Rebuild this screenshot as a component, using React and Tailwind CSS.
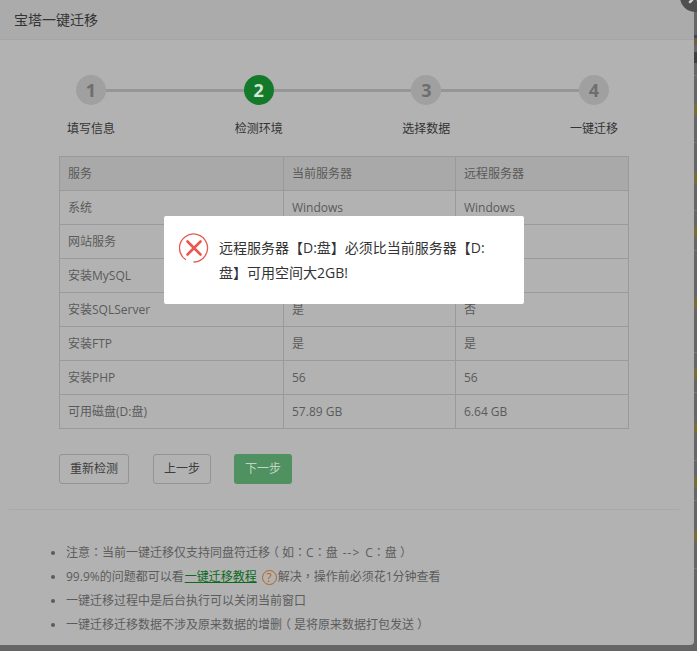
import { X } from "lucide-react";

const font = "font-['Open_Sans','Noto_Sans_CJK_SC',sans-serif]";

const steps = [
  { n: 1, label: "填写信息" },
  { n: 2, label: "检测环境", active: true },
  { n: 3, label: "选择数据" },
  { n: 4, label: "一键迁移" },
];

const rows = [
  ["系统", "Windows", "Windows"],
  ["网站服务", "", ""],
  ["安装MySQL", "", ""],
  ["安装SQLServer", "是", "否"],
  ["安装FTP", "是", "是"],
  ["安装PHP", "56", "56"],
  ["可用磁盘(D:盘)", "57.89 GB", "6.64 GB"],
];

// full width punctuation sits in the middle of its box in the reference
function Punct({ children }) {
  return <span className="font-['Noto_Sans_CJK_TC',sans-serif] leading-none">{children}</span>;
}

function OpenParen() {
  return <span className="inline-block leading-none -translate-x-[3px]">（</span>;
}

function CloseParen() {
  return <span className="inline-block leading-none translate-x-[3px]">）</span>;
}

function Steps() {
  return (
    <div className="ml-[66px] w-[553px] pt-[35px]">
      {/* Circles and lines */}
      <div className="flex items-center px-[10px]">
        {steps.map((s, i) => (
          <div key={s.n} className={i === 0 ? "flex items-center" : "flex flex-1 items-center"}>
            {i > 0 && <div className="h-[3px] flex-1 bg-[#969696]" />}
            <div
              className={
                s.active
                  ? "w-[30px] h-[30px] rounded-full bg-[#137a2b] text-[#d5e4d8] flex items-center justify-center text-[18px] font-bold"
                  : "w-[30px] h-[30px] rounded-full bg-[#a0a0a0] text-[#6e6e6e] flex items-center justify-center text-[18px] font-bold"
              }
            >
              {s.n}
            </div>
          </div>
        ))}
      </div>
      {/* Labels */}
      <div className="flex justify-between mt-[14px]">
        {steps.map((s) => (
          <div key={s.n} className="w-[50px] text-center text-[12px] leading-[20px] text-[#333] whitespace-nowrap">
            {s.label}
          </div>
        ))}
      </div>
    </div>
  );
}

function EnvTable() {
  return (
    <table className="ml-[59px] mt-[17px] w-[570px] table-fixed border-collapse text-[12px] text-[#5a5a5a]">
      <colgroup>
        <col className="w-[224px]" />
        <col className="w-[172px]" />
        <col />
      </colgroup>
      <thead>
        <tr className="h-[34px] bg-[#a9a9a9]">
          <td className="border border-[#9a9a9a] px-2">服务</td>
          <td className="border border-[#9a9a9a] px-2">当前服务器</td>
          <td className="border border-[#9a9a9a] px-2">远程服务器</td>
        </tr>
      </thead>
      <tbody>
        {rows.map((r) => (
          <tr key={r[0]} className="h-[34px]">
            <td className="border border-[#9a9a9a] px-2">{r[0]}</td>
            <td className="border border-[#9a9a9a] px-2">{r[1]}</td>
            <td className="border border-[#9a9a9a] px-2">{r[2]}</td>
          </tr>
        ))}
      </tbody>
    </table>
  );
}

function Notes() {
  return (
    <ul className="mt-[31px] pl-[66px] list-disc text-[12px] leading-[24px] text-[#5c5c5c] marker:text-[#5c5c5c]">
      <li>
        注意<Punct>：</Punct>当前一键迁移仅支持同盘符迁移<OpenParen />如<Punct>：</Punct>C<Punct>：</Punct>盘
        <span className="mx-[5px] tracking-[1px]">--&gt;</span>C<Punct>：</Punct>盘<CloseParen />
      </li>
      <li>
        99.9%的问题都可以看
        <a className="ml-px text-[#0b6a1c] underline">一键迁移教程</a>
        <span className="inline-flex align-middle ml-[5px] mr-px w-[15px] h-[15px] rounded-full border-[1.5px] border-[#b5651a] text-[#b5651a] items-center justify-center text-[12px] leading-none">
          ?
        </span>
        解决<Punct>，</Punct>操作前必须花1分钟查看
      </li>
      <li>一键迁移过程中是后台执行可以关闭当前窗口</li>
      <li>
        一键迁移迁移数据不涉及原来数据的增删<OpenParen />是将原来数据打包发送<CloseParen />
      </li>
    </ul>
  );
}

function ErrorIcon() {
  return (
    <svg width="30" height="30" viewBox="0 0 30 30" fill="none" className="shrink-0">
      <path d="M6.5 26.5A14 14 0 1 1 15 29" stroke="#e8584f" strokeWidth="1.3" strokeLinecap="round" />
      <path d="M8.5 8.5 21.5 21.5M21.5 8.5 8.5 21.5" stroke="#e8584f" strokeWidth="2.6" strokeLinecap="round" />
    </svg>
  );
}

function PageEdge() {
  return (
    <div className="flex-1 h-[645px] flex flex-col">
      <div className="mt-[35px] h-[3px] bg-[#3a4660]" />
      <div className="h-[7px] bg-[#6d5f3c]" />
      <div className="mt-[7px] h-[11px] bg-[#3f3f3f]" />
      <div className="mt-[12px] h-px bg-[#787878]" />
      <div className="mt-[29px] h-[10px] bg-[#7a6c34]" />
      <div className="mt-[27px] h-px bg-[#787878]" />
      <div className="mt-[30px] h-[10px] bg-[#7a6c34]" />
      <div className="mt-[27px] h-px bg-[#787878]" />
      <div className="mt-[16px] h-[10px] bg-[#7a6c34]" />
      <div className="mt-[13px] h-px bg-[#787878]" />
      <div className="mt-[47px] h-[10px] bg-[#7a6c34]" />
      <div className="mt-[44px] h-px bg-[#787878]" />
      <div className="mt-[16px] h-[10px] bg-[#7a6c34]" />
      <div className="mt-[13px] h-px bg-[#787878]" />
      <div className="mt-[30px] h-[10px] bg-[#7a6c34]" />
      <div className="mt-[27px] h-px bg-[#787878]" />
      <div className="mt-[16px] h-[10px] bg-[#7a6c34]" />
      <div className="mt-[13px] h-px bg-[#787878]" />
      <div className="mt-[30px] h-[10px] bg-[#7a6c34]" />
      <div className="mt-[27px] h-px bg-[#787878]" />
    </div>
  );
}

export default function App() {
  return (
    <div className={`relative w-[697px] h-[651px] overflow-hidden bg-[#666] flex items-start ${font}`}>
      {/* Migration panel */}
      <div className="w-[694px] h-[645px] bg-[#b2b2b2] rounded-br-sm">
        <div className="h-[40px] px-[14px] flex items-center bg-[#ababab] border-b border-[#a5a5a5] text-[14px] text-[#333]">
          宝塔一键迁移
        </div>
        <Steps />
        <EnvTable />
        <div className="ml-[59px] mt-[25px] flex text-[12px] text-[#3d3d3d]">
          <button className="w-[70px] h-[30px] border border-[#939393] rounded-[3px]">重新检测</button>
          <button className="ml-[24px] w-[58px] h-[30px] border border-[#939393] rounded-[3px]">上一步</button>
          <button className="ml-[23px] w-[58px] h-[30px] bg-[#4f9160] text-[#c3d3c7] rounded-[3px]">下一步</button>
        </div>
        <div className="ml-[9px] mr-[15px] mt-[25px] border-t border-[#a8a8a8]" />
        <Notes />
      </div>

      <PageEdge />

      {/* Close button */}
      <div className="absolute left-[680px] top-[-18px] w-[30px] h-[30px] rounded-full bg-[#4f4f4f] flex items-center justify-center text-[#d0d0d0]">
        <X size={20} strokeWidth={3} />
      </div>

      {/* Error message */}
      <div className="absolute left-[164px] top-[216px] w-[360px] h-[88px] bg-white rounded-[2px] flex items-start pl-[15px] pt-[17px]">
        <ErrorIcon />
        <p className="ml-[10px] w-[280px] pt-[2px] text-[14px] leading-[25px] text-[#333]">
          远程服务器【D:盘】必须比当前服务器【D:盘】可用空间大2GB!
        </p>
      </div>
    </div>
  );
}
